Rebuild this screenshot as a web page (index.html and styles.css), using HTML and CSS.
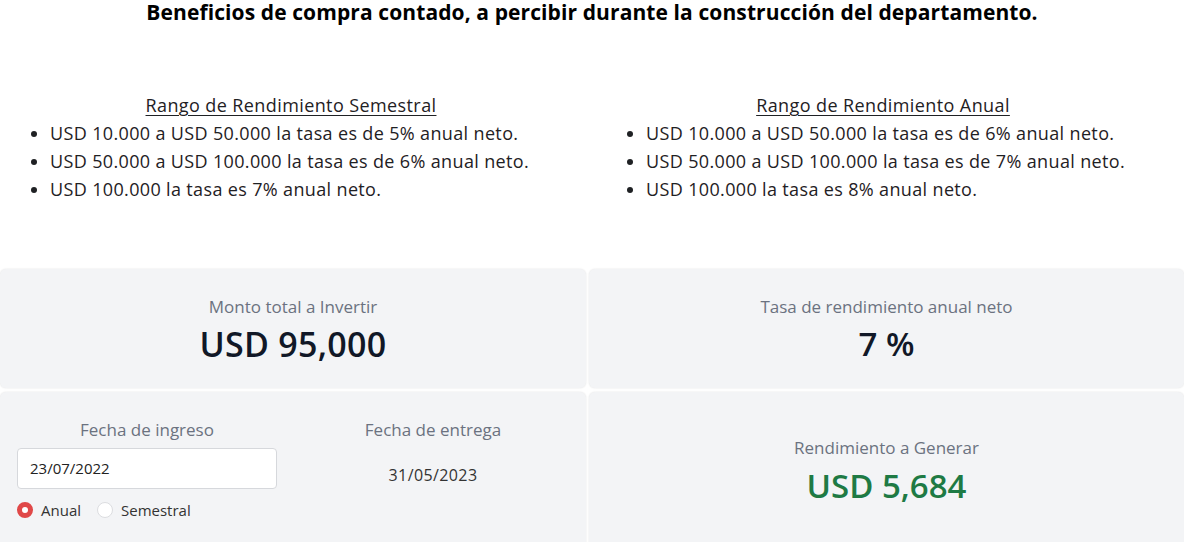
FILE: index.html
```html
<!DOCTYPE html>
<html lang="es">
<head>
<meta charset="utf-8">
<title>Beneficios</title>
<link rel="stylesheet" href="styles.css">
</head>
<body>
<h1 class="title">Beneficios de compra contado, a percibir durante la construcción del departamento.</h1>
<section class="ranges">
  <div class="range">
    <h2 class="range-title">Rango de Rendimiento Semestral</h2>
    <ul class="range-list">
      <li>USD 10.000 a USD 50.000 la tasa es de 5% anual neto.</li>
      <li>USD 50.000 a USD 100.000 la tasa es de 6% anual neto.</li>
      <li>USD 100.000 la tasa es 7% anual neto.</li>
    </ul>
  </div>
  <div class="range range-right">
    <h2 class="range-title">Rango de Rendimiento Anual</h2>
    <ul class="range-list">
      <li>USD 10.000 a USD 50.000 la tasa es de 6% anual neto.</li>
      <li>USD 50.000 a USD 100.000 la tasa es de 7% anual neto.</li>
      <li>USD 100.000 la tasa es 8% anual neto.</li>
    </ul>
  </div>
</section>
<section class="cards">
  <div class="card card-top">
    <div class="card-label">Monto total a Invertir</div>
    <div class="card-value card-value-wide">USD 95,000</div>
  </div>
  <div class="card card-top">
    <div class="card-label">Tasa de rendimiento anual neto</div>
    <div class="card-value">7 %</div>
  </div>
  <div class="card card-dates">
    <div class="date-col date-col-left">
      <div class="card-label">Fecha de ingreso</div>
      <div class="date-input">23/07/2022</div>
      <div class="radios">
        <span class="radio radio-on"></span><span class="radio-text">Anual</span>
        <span class="radio"></span><span class="radio-text">Semestral</span>
      </div>
    </div>
    <div class="date-col date-col-right">
      <div class="card-label">Fecha de entrega</div>
      <div class="date-value">31/05/2023</div>
    </div>
  </div>
  <div class="card card-result">
    <div class="card-label">Rendimiento a Generar</div>
    <div class="card-value card-value-green">USD 5,684</div>
  </div>
</section>
</body>
</html>
```
FILE: styles.css
```css
html, body {
  margin: 0;
  padding: 0;
  background: #ffffff;
  font-family: "Open Sans", "Noto Sans", sans-serif;
  color: #1f2124;
  overflow: hidden;
}
.title {
  margin: 0;
  text-align: center;
  font-size: 21px;
  line-height: 25px;
  font-weight: 700;
  letter-spacing: 0.1px;
  color: #000;
}
.ranges {
  display: grid;
  grid-template-columns: 594px 590px;
  margin-top: 66px;
}
.range-title {
  margin: 0;
  padding-right: 12px;
  text-align: center;
  font-size: 18px;
  font-weight: 400;
  line-height: 28px;
  letter-spacing: 0.4px;
  text-decoration: underline;
  text-underline-offset: 3px;
  text-decoration-thickness: 1px;
}
.range-list {
  margin: 0;
  padding-left: 50px;
  font-size: 18px;
  line-height: 28px;
  letter-spacing: 0.35px;
}
.range-right .range-list {
  padding-left: 52px;
}
.cards {
  display: grid;
  grid-template-columns: 586px 1fr;
  grid-template-rows: 119px 160px;
  gap: 4px 3px;
  margin-top: 66px;
}
.card {
  background: #f3f4f6;
  border-radius: 6px;
  box-shadow: 0 0 2px rgba(0, 0, 0, 0.12);
  display: flex;
  flex-direction: column;
  align-items: center;
}
.card-top {
  padding-top: 27px;
}
.card-label {
  font-size: 17px;
  line-height: 22px;
  color: #6b7280;
}
.card-value {
  margin-top: 4px;
  font-size: 33px;
  line-height: 44px;
  font-weight: 600;
  color: #111827;
}
.card-value-wide {
  font-size: 34px;
  letter-spacing: 0.3px;
}
.card-value-green {
  margin-top: 5px;
  color: #1e7a44;
}
.card-result {
  padding-top: 45px;
}
.card-dates {
  flex-direction: row;
  align-items: flex-start;
  padding: 27px 17px 0;
  gap: 20px;
}
.date-col {
  display: flex;
  flex-direction: column;
  align-items: center;
}
.date-col-left {
  flex: 0 0 260px;
}
.date-col-right {
  flex: 1;
}
.date-input {
  align-self: stretch;
  margin-top: 7px;
  height: 41px;
  box-sizing: border-box;
  background: #fff;
  border: 1px solid #d6d8dc;
  border-radius: 4px;
  padding: 0 12px;
  font-size: 15px;
  line-height: 39px;
  color: #222;
}
.radios {
  align-self: stretch;
  display: flex;
  align-items: center;
  margin-top: 11px;
  font-size: 15px;
  color: #333;
}
.radio {
  width: 16px;
  height: 16px;
  box-sizing: border-box;
  border-radius: 50%;
  border: 1px solid #dcdde0;
  background: #fff;
}
.radio-on {
  border: 5px solid #e04848;
}
.radio-text {
  margin-left: 8px;
  margin-right: 16px;
}
.date-value {
  margin-top: 24px;
  font-size: 16px;
  line-height: 20px;
  letter-spacing: 0.4px;
  color: #333;
}
```
